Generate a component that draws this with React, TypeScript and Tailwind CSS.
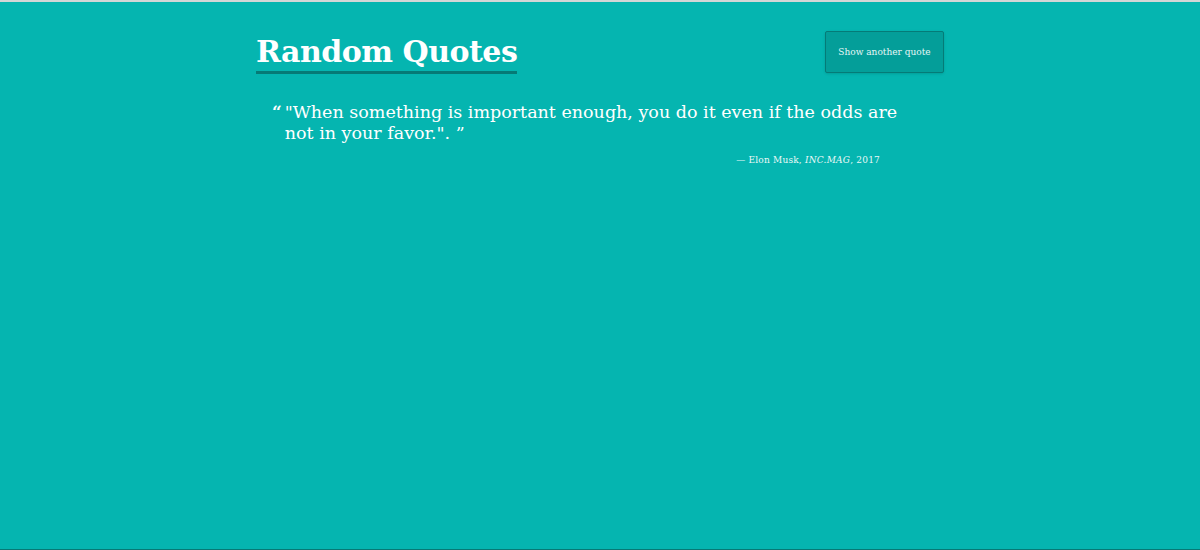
import React from 'react';

export default function App() {
  return (
    <div
      className="h-[550px] w-full bg-[#05b5b0] border-t-2 border-t-[#d3d6d6] border-b border-b-[#067a76] text-white"
      style={{ fontFamily: '"DejaVu Serif", "Liberation Serif", serif' }}
    >
      <div className="mx-auto w-[688px] pt-[28px]">
        <div className="flex items-start justify-between">
          <h1 className="mt-[4px] text-[30px] font-bold leading-[36px] tracking-[-0.5px] border-b-[3px] border-[#067a76] pb-[1px]">
            Random Quotes
          </h1>
          <button className="mt-[1px] h-[42px] w-[119px] rounded-[2px] border border-[#057b77] bg-[#049e99] pt-[1px] text-[9px] text-[#e6f7f6] shadow-sm">
            Show another quote
          </button>
        </div>

        <div className="mt-[28px] ml-[16px] flex">
          <span className="mr-[3px] text-[17px] font-bold leading-[21px]">&#8220;</span>
          <p className="w-[620px] text-[17.5px] leading-[21px]">
            "When something is important enough, you do it even if the odds are not in your favor.". &#8221;
          </p>
        </div>
        <p className="mt-[10px] w-[624px] text-right text-[9px] tracking-[0.2px] text-[#eaf8f7]">
          — Elon Musk, <em>INC.MAG</em>, 2017
        </p>
      </div>
    </div>
  );
}
